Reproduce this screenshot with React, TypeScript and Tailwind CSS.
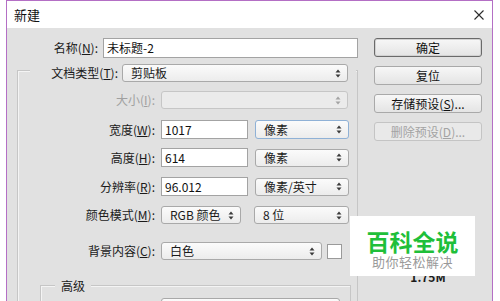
import type { ReactNode } from "react";

const font = "font-['Noto_Sans_CJK_SC','Noto_Sans',sans-serif]";

function Arrows() {
  return (
    <svg width="6" height="9" viewBox="0 0 6 9" className="shrink-0">
      <path d="M3 0.5 L5.5 3.5 L0.5 3.5 Z" fill="#3a3a3a" />
      <path d="M3 8.5 L5.5 5.5 L0.5 5.5 Z" fill="#3a3a3a" />
    </svg>
  );
}

function Select({
  children,
  className = "",
  disabled = false,
  focused = false,
}: {
  children?: ReactNode;
  className?: string;
  disabled?: boolean;
  focused?: boolean;
}) {
  return (
    <div
      className={`flex items-center justify-between rounded-[3px] border pl-[8px] pr-[6px] text-[12px] leading-none ${
        disabled
          ? "border-[#c6c6c6] bg-[#ebebeb] text-[#a0a0a0]"
          : focused
            ? "border-[#8fb1d6] bg-gradient-to-b from-[#fbfbfb] to-[#ececec] text-[#1a1a1a]"
            : "border-[#a9a9a9] bg-gradient-to-b from-[#fbfbfb] to-[#ececec] text-[#1a1a1a]"
      } ${className}`}
    >
      <span>{children}</span>
      <span className={disabled ? "opacity-40" : ""}>
        <Arrows />
      </span>
    </div>
  );
}

function Input({ value, className = "" }: { value: string; className?: string }) {
  return (
    <div
      className={`flex items-center border border-[#a3a3a3] bg-white pl-[3px] text-[12px] leading-none text-[#111] ${className}`}
    >
      {value}
    </div>
  );
}

function Label({
  children,
  className = "",
  disabled = false,
}: {
  children: ReactNode;
  className?: string;
  disabled?: boolean;
}) {
  return (
    <div
      className={`shrink-0 text-right text-[12px] leading-none ${
        disabled ? "text-[#a0a0a0]" : "text-[#1a1a1a]"
      } ${className}`}
    >
      {children}
    </div>
  );
}

function Button({
  children,
  primary = false,
  disabled = false,
}: {
  children: ReactNode;
  primary?: boolean;
  disabled?: boolean;
}) {
  return (
    <div
      className={`flex h-[19px] items-center justify-center rounded-[3px] border text-[12px] leading-none ${
        disabled
          ? "border-[#c4c4c4] bg-[#e9e9e9] text-[#a3a3a3]"
          : primary
            ? "border-[#6a6a6a] bg-gradient-to-b from-[#f7f7f7] to-[#e4e4e4] text-[#111] shadow-[inset_0_0_0_1px_#d2d2d2]"
            : "border-[#a9a9a9] bg-gradient-to-b from-[#f7f7f7] to-[#e4e4e4] text-[#111]"
      }`}
    >
      {children}
    </div>
  );
}

export default function App() {
  return (
    <div className={`h-[301px] w-[500px] overflow-hidden bg-white ${font}`}>
      <div className="ml-[6px] flex h-[301px] w-[487px] flex-col border-l border-r border-t border-[#b46fc5]">
        <header className="flex h-[27px] shrink-0 items-center justify-between bg-white pl-[7px] pr-[8px]">
          <span className="text-[13px] leading-none text-[#111]">新建</span>
          <svg width="10" height="10" viewBox="0 0 10 10">
            <path d="M0.5 0.5 L9.5 9.5 M9.5 0.5 L0.5 9.5" stroke="#2b2b2b" strokeWidth="1.1" />
          </svg>
        </header>

        <div className="relative flex flex-1 bg-[#e1e1e1]">
          {/* left form */}
          <div className="flex w-[367px] flex-col pt-[10px]">
            <div className="flex h-[20px] items-center">
              <Label className="w-[91px]">
                名称(<u>N</u>):
              </Label>
              <Input value="未标题-2" className="ml-[5px] h-[20px] w-[255px]" />
            </div>

            <div className="ml-[10px] mt-[12px] flex w-[341px] flex-1 flex-col border-l border-r border-t border-[#c6c6c6] shadow-[inset_1px_1px_0_#f4f4f4]">
              <div className="-mt-[7px] ml-[12px] flex h-[18px] w-[326px] items-center bg-[#e1e1e1]">
                <Label className="w-[88px]">
                  文档类型(<u>T</u>):
                </Label>
                <Select className="ml-[4px] h-[18px] w-[226px]">剪贴板</Select>
              </div>

              <div className="mt-[9px] flex h-[18px] items-center">
                <Label className="w-[137px]" disabled>
                  大小(<u>I</u>):
                </Label>
                <Select className="ml-[6px] h-[18px] w-[187px]" disabled />
              </div>

              <div className="mt-[11px] flex h-[19px] items-center">
                <Label className="w-[137px]">
                  宽度(<u>W</u>):
                </Label>
                <Input value="1017" className="ml-[6px] h-[19px] w-[87px]" />
                <Select className="ml-[7px] h-[19px] w-[94px]" focused>
                  像素
                </Select>
              </div>

              <div className="mt-[9px] flex h-[19px] items-center">
                <Label className="w-[137px]">
                  高度(<u>H</u>):
                </Label>
                <Input value="614" className="ml-[6px] h-[19px] w-[87px]" />
                <Select className="ml-[7px] h-[18px] w-[94px]">像素</Select>
              </div>

              <div className="mt-[10px] flex h-[19px] items-center">
                <Label className="w-[137px]">
                  分辨率(<u>R</u>):
                </Label>
                <Input value="96.012" className="ml-[6px] h-[19px] w-[87px]" />
                <Select className="ml-[7px] h-[18px] w-[94px]">像素/英寸</Select>
              </div>

              <div className="mt-[10px] flex h-[18px] items-center">
                <Label className="w-[137px]">
                  颜色模式(<u>M</u>):
                </Label>
                <Select className="ml-[6px] h-[18px] w-[80px]">RGB 颜色</Select>
                <Select className="ml-[13px] h-[18px] w-[95px]">8 位</Select>
              </div>

              <div className="mt-[18px] flex h-[18px] items-center">
                <Label className="w-[137px]">
                  背景内容(<u>C</u>):
                </Label>
                <Select className="ml-[6px] h-[18px] w-[161px]">白色</Select>
                <div className="ml-[5px] h-[15px] w-[15px] border border-[#9a9a9a] bg-white" />
              </div>

              <div className="ml-[22px] mt-[25px] flex w-[311px] flex-1 flex-col border-l border-r border-t border-[#c6c6c6] shadow-[inset_1px_1px_0_#f4f4f4]">
                <div className="-mt-[8px] ml-[14px] flex h-[16px] w-fit items-center bg-[#e1e1e1] px-[6px] text-[12px] leading-none text-[#1a1a1a]">
                  高级
                </div>
                <Select className="ml-[120px] mt-[4px] h-[18px] w-[179px]" />
              </div>
            </div>
          </div>

          {/* right buttons */}
          <div className="flex w-[108px] flex-col pt-[10px]">
            <div className="flex flex-col gap-[9px]">
              <Button primary>确定</Button>
              <Button>复位</Button>
              <Button>
                存储预设(<u>S</u>)...
              </Button>
              <Button disabled>
                删除预设(<u>D</u>)...
              </Button>
            </div>
            <div className="mt-[128px] text-center text-[12px] font-bold leading-[15px] text-[#1a1a1a]">
              1.75M
            </div>
          </div>

          {/* watermark */}
          <div className="absolute left-[343px] top-[188px] flex h-[60px] w-[125px] flex-col items-center bg-white pt-[12px]">
            <div className="text-[23px] font-bold leading-[26px] text-[#1fbf3a]">百科全说</div>
            <div className="text-[13px] leading-[16px] tracking-[0.5px] text-[#9a9a9a]">助你轻松解决</div>
          </div>
        </div>
      </div>
    </div>
  );
}
